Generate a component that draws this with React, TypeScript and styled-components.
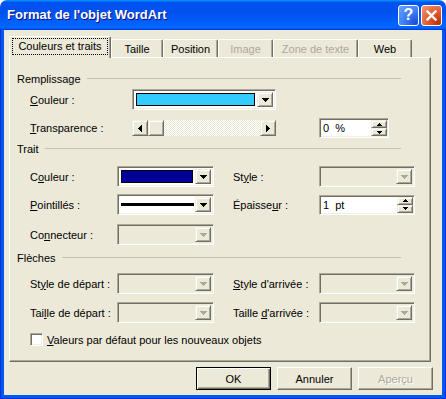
import styled, { createGlobalStyle, css } from "styled-components";

const GlobalStyle = createGlobalStyle`
  html, body { margin: 0; padding: 0; background: #fff; }
  body { font-family: "Liberation Sans", Arial, sans-serif; font-size: 11px; color: #000; }
  * { box-sizing: border-box; }
`;

type Dir = "down" | "up" | "left" | "right";

const glyphs: Record<Dir, { w: number; h: number; d: string }> = {
  down: { w: 7, h: 4, d: "M0 0h7v1H0zM1 1h5v1H1zM2 2h3v1H2zM3 3h1v1H3z" },
  up: { w: 5, h: 3, d: "M2 0h1v1H2zM1 1h3v1H1zM0 2h5v1H0z" },
  left: { w: 4, h: 7, d: "M3 0h1v7H3zM2 1h1v5H2zM1 2h1v3H1zM0 3h1v1H0z" },
  right: { w: 4, h: 7, d: "M0 0h1v7H0zM1 1h1v5H1zM2 2h1v3H2zM3 3h1v1H3z" },
};

const smallDown = { w: 5, h: 3, d: "M0 0h5v1H0zM1 1h3v1H1zM2 2h1v1H2z" };

const Glyph = ({ dir, small, color = "#000" }: { dir: Dir; small?: boolean; color?: string }) => {
  const g = small && dir === "down" ? smallDown : glyphs[dir];
  return (
    <svg width={g.w} height={g.h} viewBox={`0 0 ${g.w} ${g.h}`} shapeRendering="crispEdges">
      <path d={g.d} fill={color} />
    </svg>
  );
};

const Window = styled.div`
  width: 446px;
  height: 399px;
  display: flex;
  flex-direction: column;
`;

const TitleBar = styled.div`
  height: 30px;
  flex: none;
  display: flex;
  align-items: center;
  gap: 2px;
  padding: 0 4px 0 7px;
  border-radius: 7px 7px 0 0;
  background: linear-gradient(
    180deg,
    #0997ff,
    #0053ee 8%,
    #0050ee 40%,
    #0066ff 88%,
    #0066ff 93%,
    #005bff 95%,
    #003dd7 96%,
    #003dd7
  );
`;

const Title = styled.div`
  flex: 1;
  color: #fff;
  font-weight: bold;
  font-size: 13px;
  text-shadow: 1px 1px 0 #0f1089;
  padding-bottom: 1px;
`;

const CaptionButton = styled.div<{ $kind: "help" | "close" }>`
  width: 21px;
  height: 21px;
  border: 1px solid #fff;
  border-radius: 3px;
  display: flex;
  align-items: center;
  justify-content: center;
  color: #fff;
  font-weight: bold;
  font-size: 16px;
  background: ${(p) =>
    p.$kind === "help"
      ? "radial-gradient(circle at 90% 90%, #1d4bd2 0, #3a7af4 45%, #6aa3ff 100%)"
      : "radial-gradient(circle at 90% 90%, #b8320c 0, #e1572b 45%, #f39a76 100%)"};
`;

const Frame = styled.div`
  flex: 1;
  display: flex;
  padding: 0 1px 1px;
  background: #0831d9;
`;

const Client = styled.div`
  flex: 1;
  display: flex;
  flex-direction: column;
  background: #ece9d8;
  border: 3px solid #0058ee;
  border-top: none;
  padding-top: 6px;
`;

const TabControl = styled.div`
  margin: 0 11px 0 5px;
`;

const TabStrip = styled.div`
  display: flex;
  align-items: flex-end;
  height: 21px;
`;

const Tab = styled.div<{ $w: number; $active?: boolean; $disabled?: boolean }>`
  position: relative;
  width: ${(p) => p.$w}px;
  height: ${(p) => (p.$active ? 22 : 18)}px;
  margin-bottom: ${(p) => (p.$active ? -1 : 0)}px;
  z-index: ${(p) => (p.$active ? 1 : 0)};
  display: flex;
  align-items: center;
  justify-content: center;
  padding-bottom: ${(p) => (p.$active ? 2 : 0)}px;
  background: #ece9d8;
  border: 1px solid #fff;
  border-bottom: none;
  border-right-color: #716f64;
  border-radius: 2px 2px 0 0;
  box-shadow: inset -1px 0 0 #aca899;
  color: ${(p) => (p.$disabled ? "#aca899" : "#000")};
`;

const Focus = styled.span`
  outline: 1px dotted #000;
  padding: 1px 5px;
  line-height: 13px;
`;

const Panel = styled.div`
  height: 305px;
  border: 1px solid #fff;
  border-right-color: #716f64;
  border-bottom-color: #716f64;
  box-shadow: inset -1px -1px 0 #aca899;
  padding: 14px 0 0 7px;
`;

const SectionHeader = styled.div<{ $top: number }>`
  display: flex;
  align-items: center;
  height: 13px;
  margin-top: ${(p) => p.$top}px;
  margin-right: 29px;
  &::after {
    content: "";
    flex: 1;
    height: 1px;
    margin-left: 6px;
    background: #c5c2b2;
  }
`;

const Row = styled.div<{ $top: number; $h: number }>`
  display: flex;
  align-items: center;
  height: ${(p) => p.$h}px;
  margin-top: ${(p) => p.$top}px;
  padding-left: 13px;
`;

const Label = styled.span<{ $w: number; $ml?: number }>`
  width: ${(p) => p.$w}px;
  flex: none;
  margin-left: ${(p) => p.$ml ?? 0}px;
  white-space: nowrap;
`;

const Key = styled.u`
  text-underline-offset: 1px;
`;

const sunken = css`
  border: 1px solid;
  border-color: #aca899 #fff #fff #aca899;
  box-shadow: inset 1px 1px 0 #716f64, inset -1px -1px 0 #f1efe2;
`;

const raised = css`
  background: #ece9d8;
  border: 1px solid;
  border-color: #f1efe2 #716f64 #716f64 #f1efe2;
  box-shadow: inset 1px 1px 0 #fff, inset -1px -1px 0 #aca899;
`;

const Combo = styled.div<{ $w: number; $disabled?: boolean }>`
  width: ${(p) => p.$w}px;
  height: 21px;
  flex: none;
  display: flex;
  padding: 2px;
  background: ${(p) => (p.$disabled ? "#ece9d8" : "#fff")};
  ${sunken}
`;

const ArrowBtn = styled.div`
  width: 16px;
  flex: none;
  display: flex;
  align-items: center;
  justify-content: center;
  ${raised}
`;

const Swatch = styled.div<{ $color: string }>`
  flex: 1;
  margin: 1px 2px 1px 1px;
  border: 1px solid #000;
  background: ${(p) => p.$color};
`;

const LineSample = styled.div`
  flex: 1;
  display: flex;
  align-items: center;
  padding: 0 1px 0 1px;
  &::before {
    content: "";
    flex: 1;
    height: 3px;
    background: #000;
  }
`;

const ScrollBar = styled.div`
  width: 144px;
  height: 16px;
  flex: none;
  display: flex;
  justify-content: space-between;
  background: repeating-conic-gradient(#fff 0 25%, #ece9d8 0 50%) 0 0 / 2px 2px;
`;

const ScrollLeft = styled.div`
  display: flex;
`;

const ScrollPart = styled(ArrowBtn)`
  height: 16px;
`;

const SpinBox = styled.div<{ $w: number; $ml?: number }>`
  width: ${(p) => p.$w}px;
  height: 20px;
  flex: none;
  margin-left: ${(p) => p.$ml ?? 0}px;
  display: flex;
  align-items: center;
  padding: 1px 1px 1px 3px;
  background: #fff;
  word-spacing: 3px;
  ${sunken}
`;

const SpinText = styled.span`
  flex: 1;
`;

const SpinButtons = styled.div`
  width: 16px;
  align-self: stretch;
  display: flex;
  flex-direction: column;
`;

const SpinBtn = styled(ArrowBtn)`
  flex: 1;
  width: auto;
`;

const CheckBox = styled.div`
  width: 13px;
  height: 13px;
  flex: none;
  background: #fff;
  ${sunken}
`;

const CheckLabel = styled.span`
  margin-left: 4px;
`;

const Footer = styled.div`
  display: flex;
  justify-content: flex-end;
  gap: 6px;
  margin-top: 5px;
  padding-right: 9px;
`;

const Button = styled.button<{ $default?: boolean }>`
  width: 75px;
  height: 23px;
  padding: 0;
  font: inherit;
  color: #000;
  background: #ece9d8;
  border: 1px solid;
  border-color: #fff #716f64 #716f64 #fff;
  box-shadow: inset -1px -1px 0 #aca899;
  ${(p) =>
    p.$default &&
    css`
      border-color: #000;
      box-shadow: inset 1px 1px 0 #fff, inset -1px -1px 0 #716f64, inset -2px -2px 0 #aca899;
    `}
  &:disabled {
    color: #aca899;
    text-shadow: 1px 1px 0 #fff;
  }
`;

const DropDown = ({ w, color, line, disabled }: { w: number; color?: string; line?: boolean; disabled?: boolean }) => (
  <Combo $w={w} $disabled={disabled}>
    {color ? <Swatch $color={color} /> : line ? <LineSample /> : <div style={{ flex: 1 }} />}
    <ArrowBtn>
      <Glyph dir="down" color={disabled ? "#aca899" : "#000"} />
    </ArrowBtn>
  </Combo>
);

const Spinner = ({ w, ml, value }: { w: number; ml?: number; value: string }) => (
  <SpinBox $w={w} $ml={ml}>
    <SpinText>{value}</SpinText>
    <SpinButtons>
      <SpinBtn>
        <Glyph dir="up" />
      </SpinBtn>
      <SpinBtn>
        <Glyph dir="down" small />
      </SpinBtn>
    </SpinButtons>
  </SpinBox>
);

export default function App() {
  return (
    <Window>
      <GlobalStyle />
      <TitleBar>
        <Title>Format de l'objet WordArt</Title>
        <CaptionButton $kind="help">?</CaptionButton>
        <CaptionButton $kind="close">
          <svg width="11" height="11" viewBox="0 0 11 11">
            <path d="M1.5 1.5l8 8M9.5 1.5l-8 8" stroke="#fff" strokeWidth="2.4" strokeLinecap="square" />
          </svg>
        </CaptionButton>
      </TitleBar>
      <Frame>
        <Client>
          <TabControl>
            <TabStrip>
              <Tab $w={102} $active>
                <Focus>Couleurs et traits</Focus>
              </Tab>
              <Tab $w={52}>Taille</Tab>
              <Tab $w={55}>Position</Tab>
              <Tab $w={55} $disabled>
                Image
              </Tab>
              <Tab $w={85} $disabled>
                Zone de texte
              </Tab>
              <Tab $w={54}>Web</Tab>
            </TabStrip>
            <Panel>
              <SectionHeader $top={0}>Remplissage</SectionHeader>
              <Row $top={4} $h={21}>
                <Label $w={102}>
                  <Key>C</Key>ouleur :
                </Label>
                <DropDown w={144} color="#33ccff" />
              </Row>
              <Row $top={8} $h={20}>
                <Label $w={102}>
                  <Key>T</Key>ransparence :
                </Label>
                <ScrollBar>
                  <ScrollLeft>
                    <ScrollPart>
                      <Glyph dir="left" />
                    </ScrollPart>
                    <ScrollPart />
                  </ScrollLeft>
                  <ScrollPart>
                    <Glyph dir="right" />
                  </ScrollPart>
                </ScrollBar>
                <Spinner w={70} ml={43} value="0 %" />
              </Row>

              <SectionHeader $top={4}>Trait</SectionHeader>
              <Row $top={11} $h={21}>
                <Label $w={87}>
                  C<Key>o</Key>uleur :
                </Label>
                <DropDown w={97} color="#000099" />
                <Label $w={86} $ml={19}>
                  St<Key>y</Key>le :
                </Label>
                <DropDown w={96} disabled />
              </Row>
              <Row $top={7} $h={21}>
                <Label $w={87}>
                  <Key>P</Key>ointillés :
                </Label>
                <DropDown w={97} line />
                <Label $w={86} $ml={19}>
                  Épaisse<Key>u</Key>r :
                </Label>
                <Spinner w={96} value="1 pt" />
              </Row>
              <Row $top={9} $h={21}>
                <Label $w={87}>
                  Co<Key>n</Key>necteur :
                </Label>
                <DropDown w={97} disabled />
              </Row>

              <SectionHeader $top={6}>Flèches</SectionHeader>
              <Row $top={9} $h={21}>
                <Label $w={87}>
                  St<Key>y</Key>le de départ :
                </Label>
                <DropDown w={97} disabled />
                <Label $w={86} $ml={19}>
                  <Key>S</Key>tyle d'arrivée :
                </Label>
                <DropDown w={96} disabled />
              </Row>
              <Row $top={8} $h={21}>
                <Label $w={87}>
                  Tai<Key>l</Key>le de départ :
                </Label>
                <DropDown w={97} disabled />
                <Label $w={86} $ml={19}>
                  Taille <Key>d</Key>'arrivée :
                </Label>
                <DropDown w={96} disabled />
              </Row>
              <Row $top={10} $h={13}>
                <CheckBox />
                <CheckLabel>
                  <Key>V</Key>aleurs par défaut pour les nouveaux objets
                </CheckLabel>
              </Row>
            </Panel>
          </TabControl>
          <Footer>
            <Button $default>OK</Button>
            <Button>Annuler</Button>
            <Button disabled>Aperçu</Button>
          </Footer>
        </Client>
      </Frame>
    </Window>
  );
}
